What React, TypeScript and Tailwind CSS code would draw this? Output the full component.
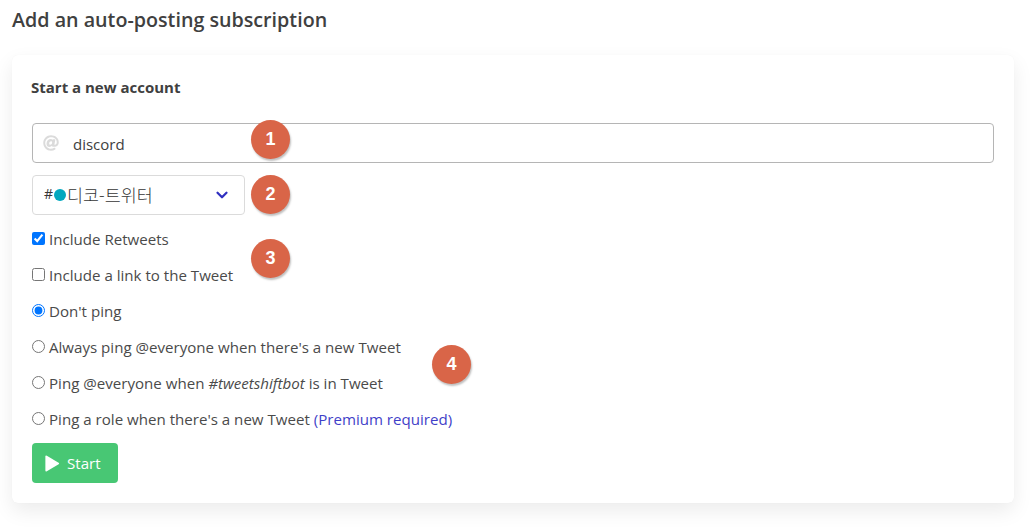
import { ChevronDown } from 'lucide-react';
import { FaAt } from 'react-icons/fa';

const font = { fontFamily: '"Open Sans", "Noto Sans CJK KR", sans-serif' };

function Badge({ n, className }: { n: number; className: string }) {
  return (
    <span
      className={`absolute flex h-[39px] w-[39px] items-center justify-center rounded-full bg-[#d96548] text-[18px] font-bold text-white shadow-[1px_2px_2px_rgba(0,0,0,0.25)] ${className}`}
      style={{ fontFamily: '"Liberation Sans", sans-serif' }}
    >
      {n}
    </span>
  );
}

export default function App() {
  return (
    <div className="relative h-[527px] w-[1030px] overflow-hidden bg-white text-[15.1px] text-[#4a4a4a]" style={font}>
      <div className="pt-[7px] pr-4 pl-3">
        <h2 className="h-[48px] text-[19.7px] leading-[25px] font-semibold text-[#404040]">Add an auto-posting subscription</h2>
        <div className="flex h-[448px] flex-col rounded-md bg-white px-5 pt-5 shadow-[0_8px_20px_rgba(10,10,10,0.08),0_0_1px_rgba(10,10,10,0.05)]">
          <h3 className="-ml-px h-[48px] text-[15px] leading-6 font-bold text-[#404040]">Start a new account</h3>
          <div className="flex h-10 items-center rounded border border-[#b5b5b5] pl-[10px]">
            <FaAt className="h-4 w-4 text-[#dbdbdb]" />
            <span className="ml-[14px] translate-y-px text-[15px] text-[#404040]">discord</span>
          </div>
          <div className="mt-[12px] flex h-10 w-[213px] items-center justify-between rounded border border-[#dbdbdb] pr-[13px] pl-[11px] text-[#363636]">
            <span className="flex items-center text-[14px]">
              <span className="-translate-y-px">#</span>
              <span className="mx-px h-3 w-3 rounded-full bg-[#00a8bf]" />
              <span className="text-[17.4px] font-light">디코-트위터</span>
            </span>
            <ChevronDown className="h-[18px] w-[18px] text-[#3030c0]" strokeWidth={3} />
          </div>
          <div className="mt-[6px] flex flex-col">
            <label className="flex h-9 items-center gap-[4px]">
              <input type="checkbox" defaultChecked className="m-0 -translate-y-px" />
              <span>Include Retweets</span>
            </label>
            <label className="flex h-9 items-center gap-[4px]">
              <input type="checkbox" className="m-0 -translate-y-px" />
              <span>Include a link to the Tweet</span>
            </label>
            <label className="flex h-9 items-center gap-[4px]">
              <input type="radio" name="ping" defaultChecked className="m-0 -translate-y-px" />
              <span>Don't ping</span>
            </label>
            <label className="flex h-9 items-center gap-[4px]">
              <input type="radio" name="ping" className="m-0 -translate-y-px" />
              <span>Always ping @everyone when there's a new Tweet</span>
            </label>
            <label className="flex h-9 items-center gap-[4px]">
              <input type="radio" name="ping" className="m-0 -translate-y-px" />
              <span>
                Ping @everyone when <em>#tweetshiftbot</em> is in Tweet
              </span>
            </label>
            <label className="flex h-9 items-center gap-[4px]">
              <input type="radio" name="ping" className="m-0 -translate-y-px" />
              <span>
                Ping a role when there's a new Tweet <span className="text-[#3f3fc8]">(Premium required)</span>
              </span>
            </label>
          </div>
          <button className="mt-[6px] flex h-10 w-[86px] items-center rounded bg-[#48c774] pl-3 text-white">
            <svg viewBox="0 0 16 18" className="h-[17px] w-[16px] fill-white">
              <path d="M1 1.5v15a1 1 0 0 0 1.5.8l12.5-7.5a1 1 0 0 0 0-1.6L2.5.7A1 1 0 0 0 1 1.5z" />
            </svg>
            <span className="ml-[7px]">Start</span>
          </button>
        </div>
      </div>
      <Badge n={1} className="top-[120px] left-[251px]" />
      <Badge n={2} className="top-[175px] left-[251px]" />
      <Badge n={3} className="top-[239px] left-[251px]" />
      <Badge n={4} className="top-[345px] left-[432px]" />
    </div>
  );
}
